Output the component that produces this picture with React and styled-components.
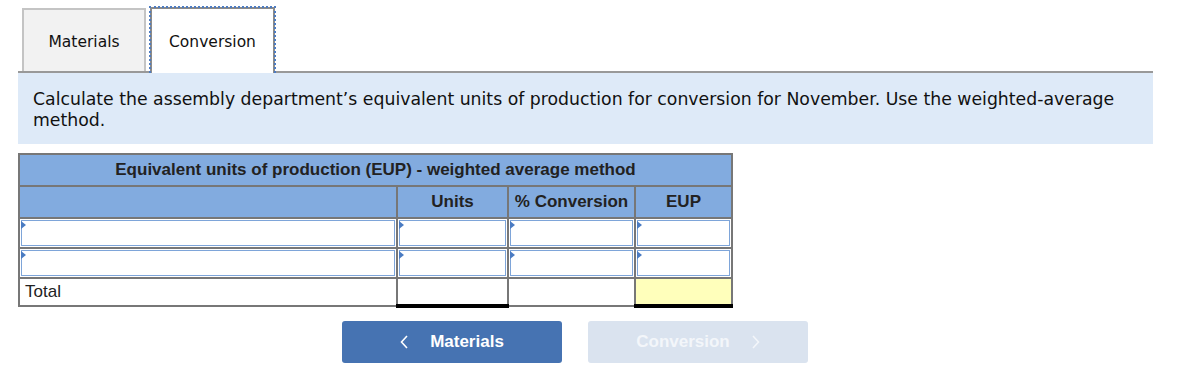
import React from "react";
import styled, { createGlobalStyle } from "styled-components";

const GlobalStyle = createGlobalStyle`
  body {
    margin: 0;
    background: #fff;
  }
`;

const rows = [0, 1];

const App = () => {
  return (
    <Page>
      <GlobalStyle />
      <TabBar>
        <Tab>Materials</Tab>
        <Tab className="active">Conversion</Tab>
      </TabBar>
      <Instructions>
        Calculate the assembly department’s equivalent units of production for
        conversion for November. Use the weighted-average method.
      </Instructions>

      <Sheet>
        <colgroup>
          <col style={{ width: 378 }} />
          <col style={{ width: 111 }} />
          <col style={{ width: 127 }} />
          <col style={{ width: 97 }} />
        </colgroup>
        <thead>
          <tr>
            <HeadCell colSpan={4}>
              Equivalent units of production (EUP) - weighted average method
            </HeadCell>
          </tr>
          <tr>
            <HeadCell />
            <HeadCell>Units</HeadCell>
            <HeadCell>% Conversion</HeadCell>
            <HeadCell>EUP</HeadCell>
          </tr>
        </thead>
        <tbody>
          {rows.map((r) => (
            <tr key={r}>
              {[0, 1, 2, 3].map((c) => (
                <InputCell key={c}>
                  <Field />
                </InputCell>
              ))}
            </tr>
          ))}
          <tr>
            <LabelCell>Total</LabelCell>
            <TotalCell />
            <PlainCell />
            <TotalCell $highlight />
          </tr>
        </tbody>
      </Sheet>

      <NavRow>
        <NavButton>
          <Chevron viewBox="0 0 8 14">
            <path d="M7 1 L1.5 7 L7 13" />
          </Chevron>
          Materials
        </NavButton>
        <NavButton disabled>
          Conversion
          <Chevron viewBox="0 0 8 14">
            <path d="M1 1 L6.5 7 L1 13" />
          </Chevron>
        </NavButton>
      </NavRow>
    </Page>
  );
};

export default App;

const Page = styled.div`
  width: 1135px;
  padding: 7px 0 0 18px;
`;

const TabBar = styled.div`
  display: flex;
  align-items: flex-end;
  gap: 2px;
  padding-left: 4px;
  border-bottom: 2px solid #999;
`;

const Tab = styled.div`
  position: relative;
  box-sizing: border-box;
  width: 124px;
  height: 63px;
  display: flex;
  align-items: center;
  justify-content: center;
  padding-top: 3px;
  background: #f2f2f2;
  border: 2px solid #c4c4c4;
  border-bottom: none;
  font-family: "DejaVu Sans", Verdana, sans-serif;
  font-size: 15.5px;
  color: #111;

  &.active {
    width: 125px;
    height: 66px;
    margin-left: 2px;
    margin-bottom: -2px;
    padding-top: 2px;
    background: #fff;
    border-color: #8a8a8a;
  }

  /* keyboard focus ring on the selected tab */
  &.active::after {
    content: "";
    position: absolute;
    top: -3px;
    left: -3px;
    right: -3px;
    bottom: 0;
    border: 2px dotted #4d7cc2;
    border-bottom: none;
  }
`;

const Instructions = styled.div`
  background: #deeaf8;
  padding: 16px 15px 13px;
  font-family: "DejaVu Sans", Verdana, sans-serif;
  font-size: 17.3px;
  line-height: 21px;
  color: #111;
`;

const Sheet = styled.table`
  margin-top: 9px;
  border-collapse: collapse;
  table-layout: fixed;
  width: 713px;
  font-family: "Liberation Sans", Arial, sans-serif;
  font-size: 17px;
  color: #222;
  border: 2px solid #777;
`;

const HeadCell = styled.th`
  background: #82abdf;
  border: 2px solid #777;
  height: 30px;
  padding: 0;
  font-weight: bold;
  text-align: center;
`;

const InputCell = styled.td`
  border: 2px solid #777;
  padding: 1px;
  height: 26px;
  background: #fff;
`;

const Field = styled.div`
  position: relative;
  box-sizing: border-box;
  height: 26px;
  border: 1px solid #7ea5d9;
  background: #fff;

  &::before {
    content: "";
    position: absolute;
    left: -1px;
    top: 0;
    border-top: 4px solid transparent;
    border-bottom: 4px solid transparent;
    border-left: 5px solid #4a7bc2;
  }
`;

const LabelCell = styled.td`
  border: 2px solid #777;
  padding: 0 5px;
  height: 26px;
  background: #fff;
`;

const PlainCell = styled.td`
  border: 2px solid #777;
  background: #fff;
`;

const TotalCell = styled.td`
  border: 2px solid #777;
  border-top: 2px solid #000;
  border-bottom: 4px solid #000;
  background: ${(p) => (p.$highlight ? "#ffffbb" : "#fff")};
`;

const NavRow = styled.div`
  display: flex;
  gap: 26px;
  margin-top: 13px;
  padding-left: 324px;
`;

const NavButton = styled.button`
  width: 220px;
  height: 42px;
  display: flex;
  align-items: center;
  justify-content: center;
  gap: 22px;
  border: none;
  border-radius: 3px;
  background: ${(p) => (p.disabled ? "#dae3ef" : "#4673b2")};
  color: ${(p) => (p.disabled ? "#f3f6fa" : "#fff")};
  font-family: "Liberation Sans", Arial, sans-serif;
  font-size: 17px;
  font-weight: bold;
  cursor: ${(p) => (p.disabled ? "default" : "pointer")};
`;

const Chevron = styled.svg`
  width: 8px;
  height: 14px;
  fill: none;
  stroke: currentColor;
  stroke-width: 1.6;
`;
